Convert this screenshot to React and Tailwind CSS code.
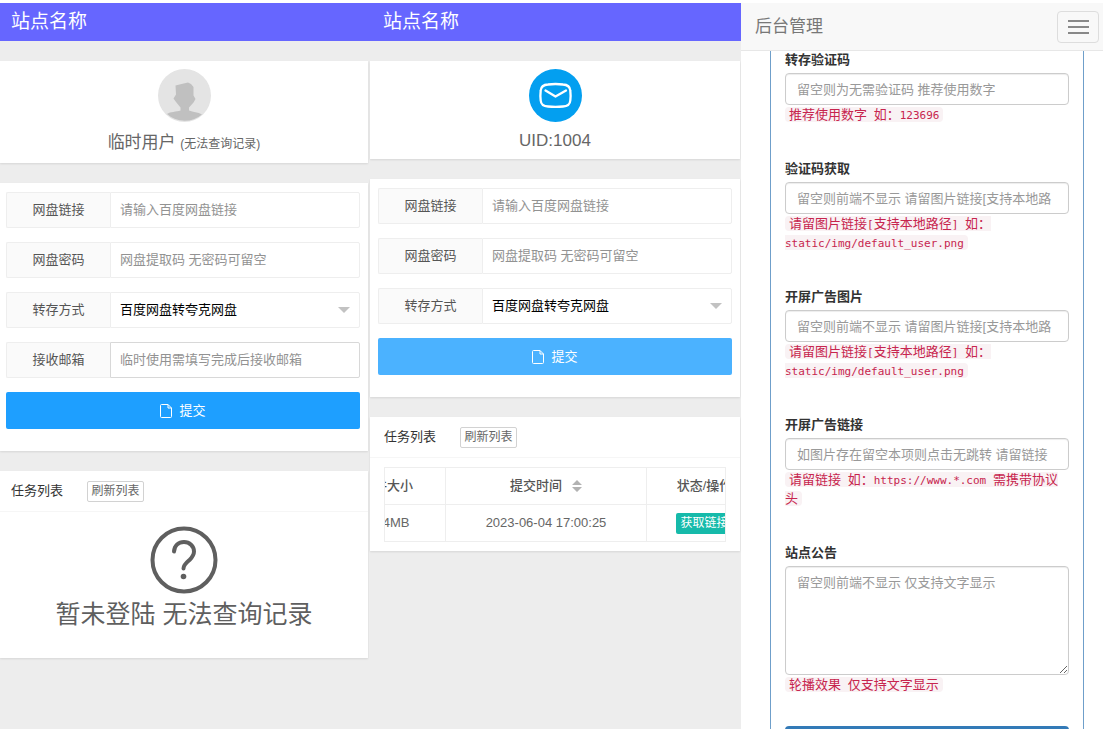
const FONT = 'font-["Liberation_Sans","Noto_Sans_CJK_SC",sans-serif]';
const CARD = "bg-white shadow-[0_1px_2px_rgba(0,0,0,0.1)]";

function FileIcon() {
  return (
    <svg width="12" height="14" viewBox="0 0 12 14" fill="none" stroke="currentColor" strokeLinejoin="round">
      <path d="M1.5 0.5h6.5l3.500 3.500v8.500a1 1 0 0 1-1 1h-9a1 1 0 0 1-1-1v-11a1 1 0 0 1 1-1z" />
      <path d="M8 0.500v3.500h3.500" />
    </svg>
  );
}

function UserAvatar() {
  return (
    <svg width="53" height="53" viewBox="0 0 53 53">
      <circle cx="26.500" cy="26.500" r="26.500" fill="#e4e4e4" />
      <path
        d="M17.500 16.500l6-1.500 6.500-1.500 3 1.500 2.500 3v8.500l2 3.500-2 3.500-4.500 5v3c4 1.500 9 1.500 13 4A26.500 26.500 0 0 1 9 45c3.500-2.500 9-2 13.500-3.500v-3L18 33l-2.500-3.500 2.500-4z"
        fill="#c0c0c0"
      />
    </svg>
  );
}

function MailAvatar() {
  return (
    <svg width="53" height="53" viewBox="0 0 53 53" fill="none" stroke="#fff" strokeLinecap="round" strokeLinejoin="round">
      <circle cx="26.500" cy="26.500" r="26.500" fill="#039ff0" stroke="none" />
      <path
        d="M19 15.500c5-.7 10-.7 15 0 5 .3 7 2 7.300 6 .4 3.500.4 7 0 10-.3 4-2.300 5.800-7.300 6-5 .6-10 .6-15 0-5-.2-7-2-7.300-6-.4-3-.4-6.500 0-10 .3-4 2.300-5.700 7.300-6z"
        strokeWidth="2.300"
      />
      <path d="M16.500 21.500l10 6 10.500-6" strokeWidth="2.300" />
    </svg>
  );
}

function QuestionIcon() {
  return (
    <svg width="68" height="68" viewBox="0 0 68 68" fill="none" stroke="#5f5f5f" strokeWidth="4" strokeLinecap="round">
      <circle cx="34" cy="34" r="31.500" />
      <path d="M24 25.500c.5-6 4.500-9.500 10-9.500 5.500 0 10 4 10 9.500 0 3.500-2 6-4.500 8.500-3.500 3-6 5-6 8.500" />
      <circle cx="33.500" cy="50.500" r="2.800" fill="#5f5f5f" stroke="none" />
    </svg>
  );
}

function SiteHeader({ className }) {
  return (
    <header className={`h-[38px] bg-[#6666ff] text-[19px] leading-[38px] text-white ${className}`}>
      站点名称
    </header>
  );
}

function Row({ id, label, children }) {
  return (
    <div className="flex h-9">
      <label
        htmlFor={id}
        className="w-26 shrink-0 rounded-l-xs border border-r-0 border-[#eee] bg-[#fafafa] text-center text-[13px] leading-[34px] text-[#555]"
      >
        {label}
      </label>
      {children}
    </div>
  );
}

function TextRow({ id, label, placeholder, active }) {
  return (
    <Row id={id} label={label}>
      <input
        id={id}
        type="text"
        placeholder={placeholder}
        className={`min-w-0 flex-1 rounded-r-xs border bg-white px-[9px] text-[13px] outline-none placeholder:text-[#929292] ${
          active ? "border-[#d8d8d8]" : "border-[#eee]"
        }`}
      />
    </Row>
  );
}

function SelectRow({ id }) {
  return (
    <Row id={id} label="转存方式">
      <div className="relative min-w-0 flex-1">
        <select
          id={id}
          className="h-full w-full appearance-none rounded-r-xs border border-[#eee] bg-white px-[9px] text-[13px] text-black outline-none"
        >
          <option>百度网盘转夸克网盘</option>
        </select>
        <svg className="pointer-events-none absolute top-[15px] right-[10px]" width="12" height="6" viewBox="0 0 12 6">
          <path d="M0 0h12L6 6z" fill="#c2c2c2" />
        </svg>
      </div>
    </Row>
  );
}

function SubmitButton({ className }) {
  return (
    <button
      type="button"
      className={`flex h-[37px] w-full items-center justify-center gap-[7px] rounded-xs text-[13px] text-white ${className}`}
    >
      <FileIcon />
      提交
    </button>
  );
}

function ListHeader({ className }) {
  return (
    <div className={`flex h-[41px] items-center border-b border-[#f6f6f6] ${className}`}>
      <h2 className="text-[13px] text-[#333]">任务列表</h2>
      <button type="button" className="ml-6 h-[21px] w-[57px] rounded-xs border border-[#d2d2d2] bg-white text-[12px] leading-[19px] text-[#666]">
        刷新列表
      </button>
    </div>
  );
}

function GuestPage() {
  return (
    <section className="bg-[#ededed] pr-px">
      <SiteHeader className="-mr-px pl-[11px]" />

      <div className={`mt-5 flex flex-col items-center pt-2 pb-[6px] ${CARD}`}>
        <UserAvatar />
        <p className="mt-2 text-[17px] leading-[25px] text-[#666]">
          临时用户 <span className="text-[12px]">(无法查询记录)</span>
        </p>
      </div>

      <form className={`mt-5 flex flex-col gap-[14px] pt-[9px] pr-2 pb-[22px] pl-[6px] ${CARD}`}>
        <TextRow id="guest-link" label="网盘链接" placeholder="请输入百度网盘链接" />
        <TextRow id="guest-code" label="网盘密码" placeholder="网盘提取码 无密码可留空" />
        <SelectRow id="guest-mode" />
        <TextRow id="guest-mail" label="接收邮箱" placeholder="临时使用需填写完成后接收邮箱" active />
        <SubmitButton className="bg-[#1e9fff]" />
      </form>

      <div className={`mt-5 ${CARD}`}>
        <ListHeader className="pl-[11px]" />
        <div className="flex flex-col items-center pt-[14px] pb-6">
          <QuestionIcon />
          <p className="text-[25px] leading-[40px] text-[#5f5f5f]">暂未登陆 无法查询记录</p>
        </div>
      </div>
    </section>
  );
}

function UserPage() {
  return (
    <section className="min-w-0 bg-[#ededed] px-px">
      <SiteHeader className="-mx-px pl-[14px]" />

      <div className={`mt-5 flex flex-col items-center pt-2 pb-[6px] ${CARD}`}>
        <MailAvatar />
        <p className="mt-[6px] text-[17px] leading-[25px] text-[#666]">UID:1004</p>
      </div>

      <form className={`mt-5 flex flex-col gap-[14px] px-2 pt-[9px] pb-[22px] ${CARD}`}>
        <TextRow id="user-link" label="网盘链接" placeholder="请输入百度网盘链接" />
        <TextRow id="user-code" label="网盘密码" placeholder="网盘提取码 无密码可留空" />
        <SelectRow id="user-mode" />
        <SubmitButton className="bg-[#4bb2ff]" />
      </form>

      <div className={`mt-5 pb-[9px] ${CARD}`}>
        <ListHeader className="pl-[14px]" />
        {/* Table is scrolled to the right inside its frame */}
        <div className="mx-[14px] mt-[9px] overflow-hidden border-x border-[#eee]">
          <table className="-ml-[57px] w-[434px] table-fixed border-collapse text-center text-[13px] text-[#666]">
            <colgroup>
              <col className="w-[117px]" />
              <col className="w-[201px]" />
              <col className="w-[116px]" />
            </colgroup>
            <thead>
              <tr className="h-[37px]">
                <th className="border border-[#eee] font-medium text-[#555]">文件大小</th>
                <th className="border border-[#eee] font-medium text-[#555]">
                  <span className="inline-flex items-center gap-[10px]">
                    提交时间
                    <svg width="10" height="12" viewBox="0 0 10 12" fill="#b2b2b2">
                      <path d="M0 5l5-5 5 5zM0 7h10l-5 5z" />
                    </svg>
                  </span>
                </th>
                <th className="border border-[#eee] font-medium text-[#555]">状态/操作</th>
              </tr>
            </thead>
            <tbody>
              <tr className="h-[37px]">
                <td className="border border-[#eee]">1.24MB</td>
                <td className="border border-[#eee]">2023-06-04 17:00:25</td>
                <td className="border border-[#eee]">
                  <button type="button" className="mx-auto block h-[21px] w-[58px] rounded-xs bg-[#16baaa] text-[12px] leading-[21px] text-white">
                    获取链接
                  </button>
                </td>
              </tr>
            </tbody>
          </table>
        </div>
      </div>
    </section>
  );
}

const CONTROL =
  "block w-full rounded-sm border border-[#ccc] bg-white px-[11px] text-[13px] text-[#555] shadow-[inset_0_1px_1px_rgba(0,0,0,0.075)] outline-none placeholder:text-[#999]";

function Field({ id, label, placeholder, multiline, children }) {
  return (
    <div className={multiline ? "mb-8" : "mb-9"}>
      <label htmlFor={id} className="mb-1 block text-[13px] leading-[18px] font-bold text-[#333]">
        {label}
      </label>
      {multiline ? (
        <textarea id={id} placeholder={placeholder} className={`h-[109px] resize py-[6px] leading-[19px] ${CONTROL}`} />
      ) : (
        <input id={id} type="text" placeholder={placeholder} className={`h-8 ${CONTROL}`} />
      )}
      <div className='font-["DejaVu_Sans_Mono","Noto_Sans_CJK_SC",monospace] text-[13px] leading-[19px]'>
        <code className="rounded-sm bg-[#f9f2f4] px-1 [font-family:inherit] text-[13px] text-[#c7254e]">
          {children}
        </code>
      </div>
    </div>
  );
}

function Latin({ children }) {
  return <span className="text-[11px] leading-none">{children}</span>;
}

function AdminPage() {
  return (
    <section className="min-w-0 bg-white">
      <nav className="flex h-12 items-center justify-between border-b border-[#e7e7e7] bg-[#f8f8f8] pr-1 pl-[14px]">
        <a href="#" className="text-[17px] text-[#777]">
          后台管理
        </a>
        <button
          type="button"
          aria-label="菜单"
          className="flex h-8 w-[42px] flex-col items-center justify-center gap-1 rounded-sm border border-[#ddd]"
        >
          <span className="h-[2px] w-[21px] bg-[#888]" />
          <span className="h-[2px] w-[21px] bg-[#888]" />
          <span className="h-[2px] w-[21px] bg-[#888]" />
        </button>
      </nav>

      <form className="mr-[19px] ml-[29px] border-x border-[#6f9fca] px-[14px]">
        <Field id="verify-code" label="转存验证码" placeholder="留空则为无需验证码 推荐使用数字">
          推荐使用数字<Latin> </Latin>如：<Latin>123696</Latin>
        </Field>
        <Field id="verify-image" label="验证码获取" placeholder="留空则前端不显示 请留图片链接[支持本地路">
          请留图片链接<Latin>[</Latin>支持本地路径<Latin>] </Latin>如：
          <br />
          <Latin>static/img/default_user.png</Latin>
        </Field>
        <Field id="splash-image" label="开屏广告图片" placeholder="留空则前端不显示 请留图片链接[支持本地路">
          请留图片链接<Latin>[</Latin>支持本地路径<Latin>] </Latin>如：
          <br />
          <Latin>static/img/default_user.png</Latin>
        </Field>
        <Field id="splash-link" label="开屏广告链接" placeholder="如图片存在留空本项则点击无跳转 请留链接">
          请留链接<Latin> </Latin>如：<Latin>https://www.*.com </Latin>需携带协议
          <br />头
        </Field>
        <Field id="notice" label="站点公告" placeholder="留空则前端不显示 仅支持文字显示" multiline>
          轮播效果<Latin> </Latin>仅支持文字显示
        </Field>
        <button type="submit" aria-label="保存" className="block h-8 w-full rounded-sm bg-[#337ab7]" />
      </form>
    </section>
  );
}

export default function App() {
  return (
    <div className={`grid h-screen grid-cols-[369fr_372fr_362fr] overflow-hidden bg-white pt-[3px] ${FONT}`}>
      <GuestPage />
      <UserPage />
      <AdminPage />
    </div>
  );
}
